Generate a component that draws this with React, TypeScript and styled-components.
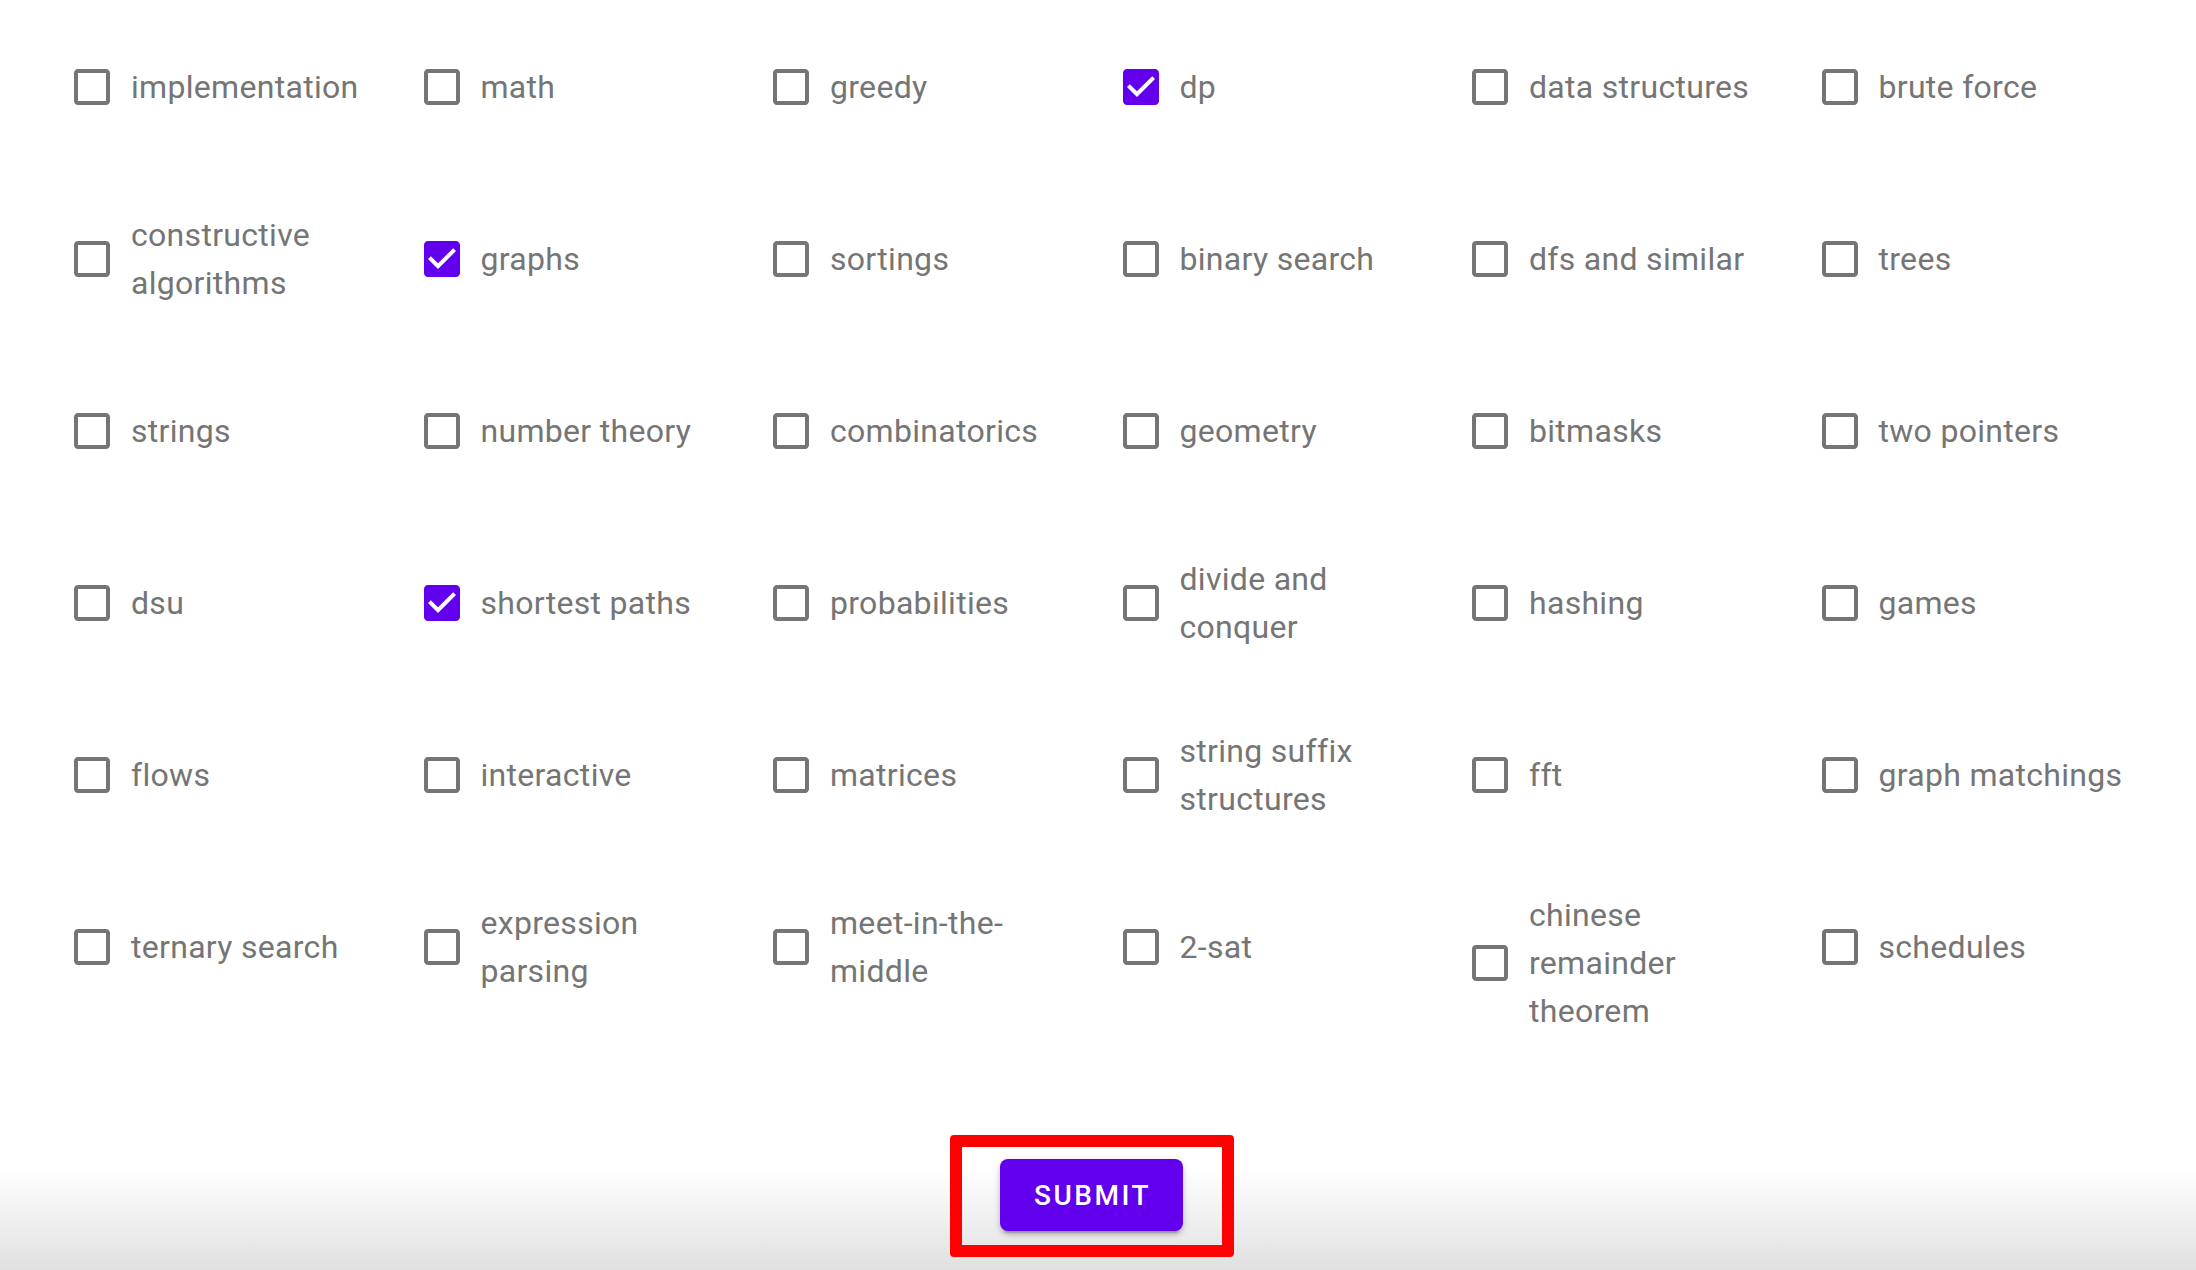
import React from 'react';
import styled, { createGlobalStyle } from 'styled-components';

const GlobalStyle = createGlobalStyle`
  html, body {
    margin: 0;
    padding: 0;
  }
  body {
    font-family: Roboto, "Liberation Sans", sans-serif;
    background: #fff;
  }
`;

const Page = styled.div`
  width: 2196px;
  height: 1270px;
  overflow: hidden;
  background: linear-gradient(to bottom, #ffffff 0px, #ffffff 1170px, #e0e0e0 1270px);
`;

const TagGrid = styled.div`
  display: grid;
  grid-template-columns: repeat(6, 349.5px);
  row-gap: 60px;
  align-items: start;
  padding: 31px 0 0 50px;
`;

const TagLabel = styled.label`
  display: flex;
  align-items: center;
  min-height: 112px;
  padding-right: 10px;
  cursor: pointer;
`;

const BoxWrap = styled.span`
  display: inline-flex;
  flex-shrink: 0;
  padding: 18px;
  border-radius: 50%;
`;

const TagText = styled.span`
  margin-left: -3px;
  font-size: 32px;
  line-height: 48px;
  font-weight: 400;
  color: #757575;
  letter-spacing: 0.3px;
`;

const Footer = styled.div`
  display: flex;
  justify-content: center;
  padding-right: 12px;
  margin-top: 100px;
`;

const Highlight = styled.div`
  border: 12px solid #ff0000;
  border-radius: 4px;
  padding: 12px 39px 14px 38px;
`;

const SubmitButton = styled.button`
  height: 72px;
  padding: 0 32px 0 34px;
  border: none;
  border-radius: 8px;
  background: #6200ee;
  color: #fff;
  font-family: Roboto, "Liberation Sans", sans-serif;
  font-size: 28px;
  font-weight: 500;
  letter-spacing: 2.5px;
  text-transform: uppercase;
  box-shadow: 0 6px 2px -4px rgba(0, 0, 0, 0.2), 0 4px 4px 0 rgba(0, 0, 0, 0.14),
    0 2px 10px 0 rgba(0, 0, 0, 0.12);
  cursor: pointer;
`;

const tags = [
  'implementation', 'math', 'greedy', 'dp', 'data structures', 'brute force',
  'constructive algorithms', 'graphs', 'sortings', 'binary search', 'dfs and similar', 'trees',
  'strings', 'number theory', 'combinatorics', 'geometry', 'bitmasks', 'two pointers',
  'dsu', 'shortest paths', 'probabilities', 'divide and conquer', 'hashing', 'games',
  'flows', 'interactive', 'matrices', 'string suffix structures', 'fft', 'graph matchings',
  'ternary search', 'expression parsing', 'meet-in-the-middle', '2-sat', 'chinese remainder theorem', 'schedules',
];

const initialChecked = ['dp', 'graphs', 'shortest paths'];

const CheckIcon: React.FC<{ checked: boolean }> = ({ checked }) => (
  <svg width="48" height="48" viewBox="0 0 24 24">
    {checked ? (
      <path
        fill="#6200ee"
        d="M19 3H5c-1.11 0-2 .9-2 2v14c0 1.1.89 2 2 2h14c1.1 0 2-.9 2-2V5c0-1.1-.9-2-2-2zm-9 14l-5-5 1.41-1.41L10 14.17l7.59-7.59L19 8l-7 7z"
      />
    ) : (
      <path
        fill="#757575"
        d="M19 5v14H5V5h14m0-2H5c-1.11 0-2 .9-2 2v14c0 1.1.89 2 2 2h14c1.1 0 2-.9 2-2V5c0-1.1-.9-2-2-2z"
      />
    )}
  </svg>
);

const App: React.FC = () => {
  const [checked, setChecked] = React.useState<string[]>(initialChecked);

  const toggle = (tag: string) =>
    setChecked((prev) => (prev.includes(tag) ? prev.filter((t) => t !== tag) : [...prev, tag]));

  return (
    <Page>
      <GlobalStyle />
      <TagGrid>
        {tags.map((tag) => (
          <TagLabel key={tag} onClick={() => toggle(tag)}>
            <BoxWrap>
              <CheckIcon checked={checked.includes(tag)} />
            </BoxWrap>
            <TagText>{tag}</TagText>
          </TagLabel>
        ))}
      </TagGrid>
      <Footer>
        <Highlight>
          <SubmitButton>Submit</SubmitButton>
        </Highlight>
      </Footer>
    </Page>
  );
};

export default App;
